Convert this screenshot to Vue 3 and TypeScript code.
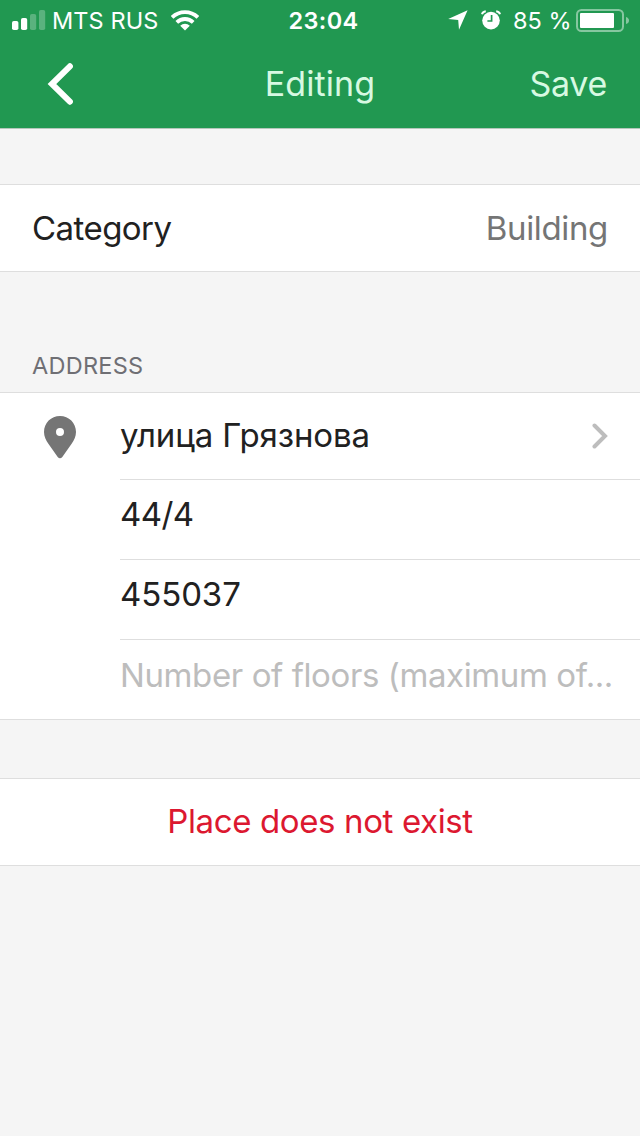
<script setup lang="ts">
interface Field {
  text: string
  placeholder?: boolean
}

const street = 'улица Грязнова'
const fields: Field[] = [
  { text: '44/4' },
  { text: '455037' },
  { text: 'Number of floors (maximum of...', placeholder: true },
]
</script>

<template>
  <div class="screen">
    <header class="header">
      <div class="status">
        <div class="side">
          <svg class="signal" width="34" height="20" viewBox="0 0 34 20">
            <rect x="0" y="11" width="6.4" height="9" rx="1.8" fill="#fff" />
            <rect x="9" y="8" width="6.2" height="12" rx="1.8" fill="#fff" />
            <rect x="18" y="4" width="6.2" height="16" rx="1.8" fill="#fff" opacity=".26" />
            <rect x="27" y="0" width="6.2" height="20" rx="1.8" fill="#fff" opacity=".26" />
          </svg>
          <span class="carrier">MTS RUS</span>
          <svg class="wifi" width="28" height="21" viewBox="0 0 28 21">
            <g fill="none" stroke="#fff" stroke-width="3.8">
              <path d="M1.1 7.4 A18.6 18.6 0 0 1 26.9 7.4" />
              <path d="M5.8 12.3 A11.8 11.8 0 0 1 22.2 12.3" />
            </g>
            <path d="M14 20.5 L9.2 15.7 A7 7 0 0 1 18.8 15.7 Z" fill="#fff" />
          </svg>
        </div>
        <span class="time">23:04</span>
        <div class="side right">
          <svg class="location" width="20" height="20" viewBox="0 0 20 20">
            <path d="M19.6 .2 L11 19.8 L10.2 9.9 L.2 9 Z" fill="#fff" />
          </svg>
          <svg class="alarm" width="20" height="20" viewBox="0 0 20 20">
            <circle cx="10" cy="10.6" r="8.8" fill="#fff" />
            <path d="M1 4.2 Q1.6 1.6 4.8 1.2 M15.2 1.2 Q18.4 1.6 19 4.2" fill="none" stroke="#fff" stroke-width="2" />
            <path d="M10.6 5 V11 H6.4" fill="none" stroke="#219851" stroke-width="1.7" />
          </svg>
          <span class="percent">85 %</span>
          <svg class="battery" width="53" height="23" viewBox="0 0 53 23">
            <rect x="1" y="1" width="46" height="21" rx="4.5" fill="none" stroke="#fff" stroke-opacity=".46" stroke-width="2" />
            <rect x="4" y="4" width="34" height="15" rx="1" fill="#fff" />
            <path d="M50 8 Q53 9 53 11.5 Q53 14 50 15 Z" fill="#fff" opacity=".46" />
          </svg>
        </div>
      </div>
      <nav class="nav">
        <button class="back" aria-label="Back">
          <svg width="28" height="44" viewBox="0 0 28 44">
            <path d="M22.9 4.3 L4.9 22 L22.9 39.7" fill="none" stroke="#fff" stroke-width="6" stroke-linecap="round" />
          </svg>
        </button>
        <span class="title">Editing</span>
        <button class="save">Save</button>
      </nav>
    </header>

    <section class="card category">
      <span class="category-label">Category</span>
      <span class="category-value">Building</span>
    </section>

    <h2 class="heading"><span>ADDRESS</span></h2>
    <section class="card address">
      <div class="pin">
        <svg width="32" height="44" viewBox="0 0 32 44">
          <path fill-rule="evenodd" fill="#757575" d="M16 0 C7.1 0 0 7 0 15.9 C0 20.7 2 24.2 4.2 27.4 L13.7 41 Q16 43.6 18.3 41 L27.8 27.4 C30 24.2 32 20.7 32 15.9 C32 7 24.9 0 16 0 Z M16 12 A4 4 0 1 1 16 20 A4 4 0 1 1 16 12 Z" />
        </svg>
      </div>
      <div class="fields">
        <div class="street">
          <span class="street-name">{{ street }}</span>
          <svg width="16" height="26" viewBox="0 0 16 26">
            <path d="M2.5 2.5 L13 13 L2.5 23.5" fill="none" stroke="#bdbdbd" stroke-width="4" stroke-linecap="round" />
          </svg>
        </div>
        <div v-for="(field, i) in fields" :key="i" class="field" :class="['field-' + i, { placeholder: field.placeholder }]">
          <span>{{ field.text }}</span>
        </div>
      </div>
    </section>

    <section class="card remove"><span>Place does not exist</span></section>
  </div>
</template>

<style>
body {
  margin: 0;
  background: #f5f5f5;
}
</style>

<style scoped>
.screen {
  height: 1136px;
  background: #f5f5f5;
  color: #212121;
  font: 33px/40px Inter, "Liberation Sans", sans-serif;
  white-space: nowrap;
  overflow: hidden;
}
.header {
  height: 128px;
  background: #219851;
  border-bottom: 1px solid #b5c7bb;
  color: #fff;
}
.status {
  height: 40px;
  display: grid;
  grid-template-columns: 1fr auto 1fr;
  align-items: center;
  font-size: 24px;
  line-height: 38px;
}
.side {
  display: flex;
  align-items: center;
  padding-left: 12px;
}
.right {
  justify-content: flex-end;
  padding: 0 11px 0 0;
}
.carrier {
  width: 107px;
  margin: 2px 0 0 6px;
  font-size: 23.5px;
  font-weight: 400;
  letter-spacing: 0.1px;
}
.wifi {
  margin-left: 12px;
}
.time {
  padding: 2px 0 0 7px;
  font-weight: 600;
  font-size: 23.5px;
  letter-spacing: 0.4px;
}
.alarm {
  margin-left: 13px;
}
.percent {
  width: 57px;
  margin: 2px 0 0 12px;
  font-size: 23.5px;
  font-weight: 400;
  letter-spacing: 0;
}
.battery {
  margin-left: 6px;
}
.nav {
  height: 88px;
  display: grid;
  grid-template-columns: 1fr auto 1fr;
  align-items: center;
  color: #d7f9e2;
  font-size: 34px;
}
button {
  border: 0;
  padding: 0;
  background: none;
  color: inherit;
  font: inherit;
}
.back {
  justify-self: start;
  height: 44px;
  margin-left: 47px;
}
.back svg {
  display: block;
}
.title {
  letter-spacing: 0.1px;
}
.save {
  justify-self: end;
  margin-right: 33px;
  letter-spacing: -0.3px;
}
.card {
  background: #fff;
  border: solid #dedede;
  border-width: 1px 0;
}
.category {
  margin-top: 55px;
  height: 86px;
  padding: 0 32px;
  display: flex;
  justify-content: space-between;
  align-items: center;
}
.category-label {
  letter-spacing: -0.55px;
}
.category-value {
  color: #757575;
  letter-spacing: -0.35px;
}
.heading {
  height: 120px;
  box-sizing: border-box;
  margin: 0;
  padding: 74px 0 0 32px;
  color: #6f6f74;
  font-size: 23.5px;
  font-weight: 400;
  letter-spacing: 0.25px;
}
.address {
  display: flex;
}
.pin {
  width: 120px;
  box-sizing: border-box;
  padding: 23px 0 0 44px;
}
.pin svg {
  display: block;
}
.fields {
  flex: 1;
  min-width: 0;
}
.street,
.field {
  display: flex;
  align-items: center;
  border-bottom: 1px solid #dedede;
}
.street {
  height: 86px;
  justify-content: space-between;
  padding-right: 32px;
}
.street-name {
  margin-bottom: 2px;
  letter-spacing: -0.12px;
}
.field {
  height: 68px;
  padding-bottom: 11px;
  letter-spacing: -0.1px;
}
.field-0 {
  letter-spacing: -0.6px;
}
.field:last-child {
  border-bottom: 0;
  height: 70px;
  padding-bottom: 9px;
}
.placeholder {
  color: #bdbdbd;
  letter-spacing: -0.4px;
}
.remove {
  margin-top: 58px;
  height: 86px;
  display: flex;
  align-items: center;
  justify-content: center;
  color: #dc1830;
  letter-spacing: -0.37px;
}
.remove span {
  margin-bottom: 2px;
}
</style>
